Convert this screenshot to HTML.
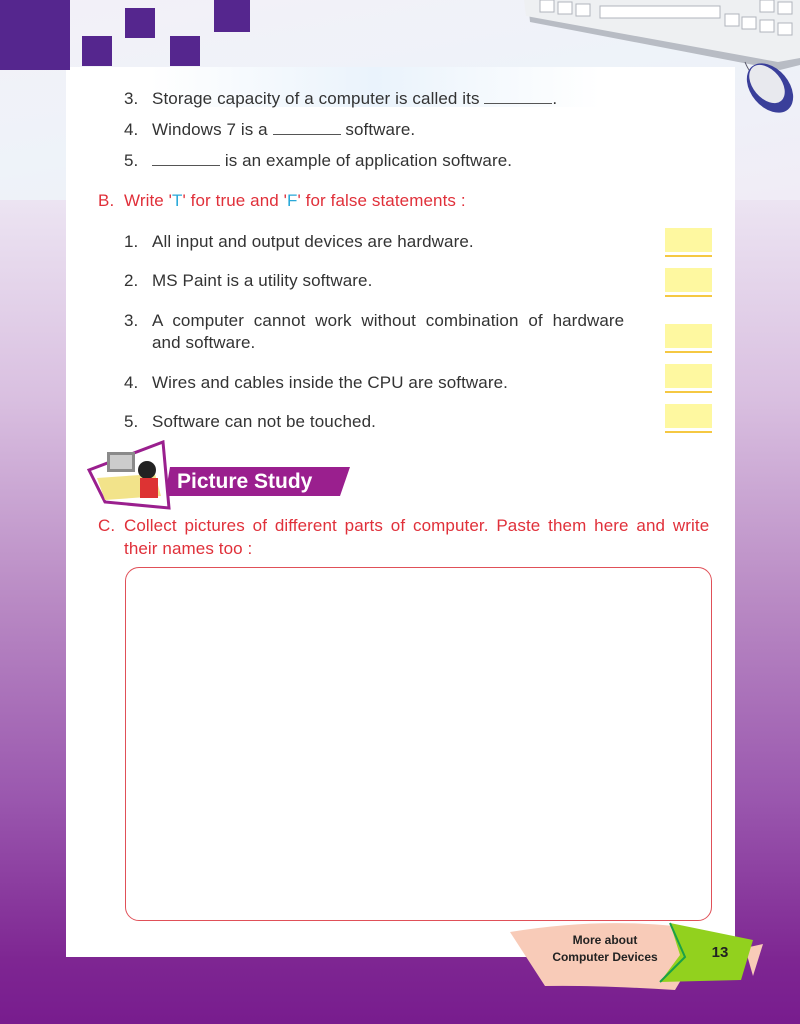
<!DOCTYPE html>
<html><head><style>
body{margin:0;width:800px;height:1024px;position:relative;overflow:hidden;font-family:"Liberation Sans",sans-serif;
background:linear-gradient(180deg,#f2eef7 0px,#ece4f2 200px,#d9bfe0 400px,#b98ac4 600px,#9a57ae 800px,#7e2692 960px,#781c8e 1024px);}
.t{position:absolute;font-size:17px;color:#333;white-space:nowrap;letter-spacing:0.1px}
.n{position:absolute;left:-28px}
.r{color:#e0303a}
.c{color:#29a8d8}
.sq{position:absolute;background:#55268e}
.box{position:absolute;left:665px;width:47px;height:24px;background:#fef8a0;border-bottom:2px solid #fff}
.box:after{content:"";position:absolute;left:0;right:0;bottom:-5px;height:2px;background:#f5c842}
.u{display:inline-block;border-bottom:1px solid #555;height:14px}
</style></head><body>
<div style="position:absolute;left:0;top:0;width:800px;height:200px;background:linear-gradient(170deg,#f3f0f8,#eef3f9 50%,#f0ecf6)"></div>
<div style="position:absolute;left:66px;top:67px;width:669px;height:890px;background:#fff"></div>
<div style="position:absolute;left:150px;top:67px;width:450px;height:40px;background:linear-gradient(90deg,rgba(230,240,250,0),rgba(225,238,250,.7),rgba(240,240,250,0))"></div>
<div class="sq" style="left:0;top:0;width:70px;height:70px"></div>
<div class="sq" style="left:82px;top:36px;width:30px;height:30px"></div>
<div class="sq" style="left:125px;top:8px;width:30px;height:30px"></div>
<div class="sq" style="left:170px;top:36px;width:30px;height:30px"></div>
<div class="sq" style="left:214px;top:0;width:36px;height:32px"></div>
<svg style="position:absolute;left:520px;top:0" width="280" height="120">
<polygon points="8,0 280,0 280,65 260,70 10,22" fill="#b8bcc4"/>
<polygon points="4,0 280,0 280,58 258,62 6,16" fill="#eef0f2"/>
<g fill="#fff" stroke="#b0b4bc" stroke-width="1">
<rect x="20" y="0" width="14" height="12"/><rect x="38" y="2" width="14" height="12"/><rect x="56" y="4" width="14" height="12"/><rect x="80" y="6" width="120" height="12"/><rect x="205" y="14" width="14" height="12"/><rect x="222" y="17" width="14" height="12"/><rect x="240" y="20" width="14" height="12"/><rect x="258" y="23" width="14" height="12"/><rect x="240" y="0" width="14" height="12"/><rect x="258" y="2" width="14" height="12"/>
</g>
<path d="M225,62 Q230,75 240,80" stroke="#556" fill="none"/>
<ellipse cx="250" cy="88" rx="19" ry="28" transform="rotate(-40 250 88)" fill="#3a3f9a"/>
<ellipse cx="247" cy="84" rx="14" ry="22" transform="rotate(-40 247 84)" fill="#e8e9ee"/>
</svg>
<div class="t" style="left:152px;top:89px"><span class="n">3.</span>Storage capacity of a computer is called its <span class="u" style="width:68px"></span>.</div>
<div class="t" style="left:152px;top:120px"><span class="n">4.</span>Windows 7 is a <span class="u" style="width:68px"></span> software.</div>
<div class="t" style="left:152px;top:151px"><span class="n">5.</span><span class="u" style="width:68px"></span> is an example of application software.</div>
<div class="t r" style="left:124px;top:191px"><span class="n" style="left:-26px">B.</span>Write '<span class="c">T</span>' for true and '<span class="c">F</span>' for false statements :</div>
<div class="t" style="left:152px;top:232px"><span class="n">1.</span>All input and output devices are hardware.</div>
<div class="t" style="left:152px;top:271px"><span class="n">2.</span>MS Paint is a utility software.</div>
<div class="t" style="left:152px;top:311px;word-spacing:5px"><span class="n">3.</span>A computer cannot work without combination of hardware</div>
<div class="t" style="left:152px;top:333px">and software.</div>
<div class="t" style="left:152px;top:373px"><span class="n">4.</span>Wires and cables inside the CPU are software.</div>
<div class="t" style="left:152px;top:412px"><span class="n">5.</span>Software can not be touched.</div>
<div class="box" style="top:228px"></div>
<div class="box" style="top:268px"></div>
<div class="box" style="top:324px"></div>
<div class="box" style="top:364px"></div>
<div class="box" style="top:404px"></div>
<svg style="position:absolute;left:85px;top:440px" width="270" height="70">
<polygon points="85,27 265,27 255,56 80,56" fill="#9a1f8e"/>
<polygon points="4,30 78,2 84,68 20,62" fill="#fff" stroke="#9a1f8e" stroke-width="3"/>
<rect x="22" y="12" width="28" height="20" fill="#8a8a8a"/><rect x="25" y="15" width="22" height="14" fill="#ccc"/>
<polygon points="12,38 70,34 76,56 20,60" fill="#f2e38a"/>
<circle cx="62" cy="30" r="9" fill="#222"/><rect x="55" y="38" width="18" height="20" fill="#d33"/>
<text x="92" y="48" font-family="Liberation Sans,sans-serif" font-weight="bold" font-size="21" fill="#fff">Picture  Study</text>
</svg>
<div class="t r" style="left:124px;top:516px;word-spacing:3px"><span class="n" style="left:-26px;word-spacing:0">C.</span>Collect pictures of different parts of computer. Paste them here and write</div>
<div class="t r" style="left:124px;top:539px">their names too :</div>
<div style="position:absolute;left:125px;top:567px;width:585px;height:352px;border:1.5px solid #e05058;border-radius:14px"></div>
<svg style="position:absolute;left:505px;top:920px" width="260" height="70">
<path d="M5,12 Q90,-2 170,6 L188,40 L170,70 Q90,65 40,66 Z" fill="#f8cbb8"/>
<polygon points="240,28 258,24 248,56" fill="#f8cbb8"/>
<polygon points="165,3 248,20 236,60 155,62 175,35" fill="#92d11e"/>
<path d="M165,3 L180,37 L155,62" stroke="#1aa048" stroke-width="2" fill="none"/>
<text x="215" y="37" text-anchor="middle" font-family="Liberation Sans,sans-serif" font-weight="bold" font-size="15" fill="#222">13</text>
<text x="100" y="24" text-anchor="middle" font-family="Liberation Sans,sans-serif" font-weight="bold" font-size="12" fill="#222">More about</text>
<text x="100" y="41" text-anchor="middle" font-family="Liberation Sans,sans-serif" font-weight="bold" font-size="12" fill="#222">Computer Devices</text>
</svg>
</body></html>
